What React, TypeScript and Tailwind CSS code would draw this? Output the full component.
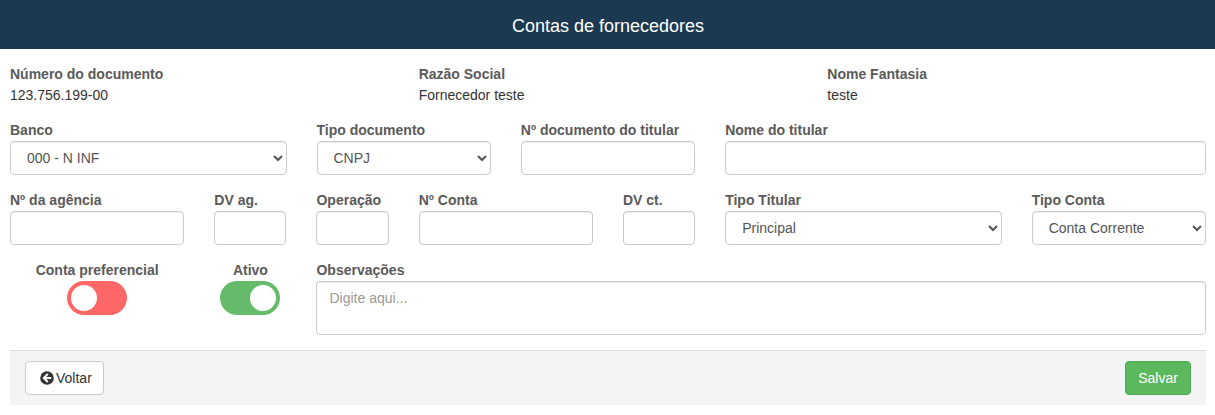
import type { ReactNode } from "react";

const control =
  "block h-[34px] w-full rounded-[4px] border border-[#ccc] bg-white px-3 py-1.5 text-[14px] leading-5 text-[#555] shadow-[inset_0_1px_1px_rgba(0,0,0,0.075)] outline-none focus:border-[#66afe9]";

function Field({ label, span, children, center = false }: { label: string; span: string; children: ReactNode; center?: boolean }) {
  return (
    <div className={`${span} flex min-w-0 flex-col ${center ? "items-center" : ""}`}>
      <label className="h-[21px] whitespace-nowrap font-bold leading-5 text-[#5a5a5a]">{label}</label>
      {children}
    </div>
  );
}

function TextField({ label, span }: { label: string; span: string }) {
  return (
    <Field label={label} span={span}>
      <input type="text" aria-label={label} className={control} />
    </Field>
  );
}

function SelectField({ label, span, value }: { label: string; span: string; value: string }) {
  return (
    <Field label={label} span={span}>
      <select aria-label={label} className={control}>
        <option>{value}</option>
      </select>
    </Field>
  );
}

function Toggle({ on }: { on: boolean }) {
  return (
    <button
      type="button"
      role="switch"
      aria-checked={on}
      className={`flex h-[34px] w-[60px] items-center rounded-full px-1 ${on ? "justify-end bg-[#66bb6a]" : "justify-start bg-[#ff6666]"}`}
    >
      <span className="size-[26px] rounded-full bg-white" />
    </button>
  );
}

const row = "grid grid-cols-12 gap-x-[30px]";

export default function App() {
  return (
    <div className="h-[415px] bg-white font-['Liberation_Sans',Arial,sans-serif] text-[14px] leading-5 text-[#333]">
      <header className="flex h-[49px] items-center justify-center bg-[#1b3a52] pl-px pt-0.5 text-[18px] text-white">
        <h1>Contas de fornecedores</h1>
      </header>
      <main className="ml-[10px] w-[1196px] pt-[15px]">
        <div className={`${row} h-[56px]`}>
          <Field label="Número do documento" span="col-span-4"><span>123.756.199-00</span></Field>
          <Field label="Razão Social" span="col-span-4"><span>Fornecedor teste</span></Field>
          <Field label="Nome Fantasia" span="col-span-4"><span>teste</span></Field>
        </div>
        <div className={`${row} h-[70px]`}>
          <SelectField label="Banco" span="col-span-3" value="000 - N INF" />
          <SelectField label="Tipo documento" span="col-span-2" value="CNPJ" />
          <TextField label="Nº documento do titular" span="col-span-2" />
          <TextField label="Nome do titular" span="col-span-5" />
        </div>
        <div className={`${row} h-[70px]`}>
          <TextField label="Nº da agência" span="col-span-2" />
          <TextField label="DV ag." span="col-span-1" />
          <TextField label="Operação" span="col-span-1" />
          <TextField label="Nº Conta" span="col-span-2" />
          <TextField label="DV ct." span="col-span-1" />
          <SelectField label="Tipo Titular" span="col-span-3" value="Principal" />
          <SelectField label="Tipo Conta" span="col-span-2" value="Conta Corrente" />
        </div>
        <div className={`${row} h-[90px]`}>
          <Field label="Conta preferencial" span="col-span-2" center><Toggle on={false} /></Field>
          <Field label="Ativo" span="col-span-1" center><Toggle on /></Field>
          <Field label="Observações" span="col-span-9">
            <textarea
              aria-label="Observações"
              placeholder="Digite aqui..."
              className="block h-[54px] w-full resize-none rounded-[4px] border border-[#ccc] bg-white px-3 py-1.5 text-[14px] leading-5 text-[#555] shadow-[inset_0_1px_1px_rgba(0,0,0,0.075)] outline-none placeholder:text-[#999]"
            />
          </Field>
        </div>
        <footer className="flex h-[55px] items-center justify-between rounded-b-[3px] border-t border-[#ddd] bg-[#f4f4f4] px-[15px]">
          <button type="button" className="flex h-[34px] w-[79px] items-center gap-[2px] rounded-[4px] border border-[#ccc] bg-white pl-[14px] text-[#333]">
            <svg viewBox="0 0 14 14" className="size-[14px]" aria-hidden="true">
              <circle cx="7" cy="7" r="6.8" fill="#333" />
              <path d="M7.8 3 3.8 7l4 4M4.2 7h7" fill="none" stroke="#fff" strokeWidth="2" />
            </svg>
            Voltar
          </button>
          <button type="button" className="h-[34px] w-[66px] rounded-[4px] border border-[#4cae4c] bg-[#5cb85c] text-white">Salvar</button>
        </footer>
      </main>
    </div>
  );
}
